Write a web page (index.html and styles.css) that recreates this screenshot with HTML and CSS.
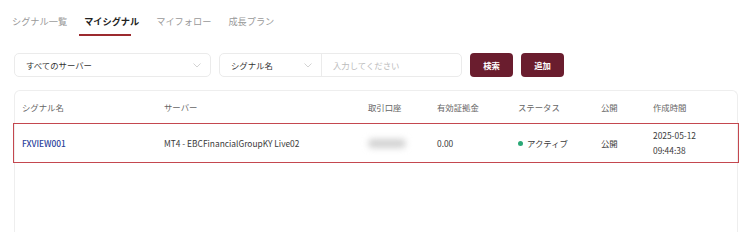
FILE: index.html
```html
<!DOCTYPE html>
<html lang="ja">
<head>
<meta charset="utf-8">
<link rel="stylesheet" href="styles.css">
</head>
<body>
<div class="page">
  <nav class="tabs">
    <span class="tab">シグナル一覧</span>
    <span class="tab active">マイシグナル</span>
    <span class="tab">マイフォロー</span>
    <span class="tab">成長プラン</span>
  </nav>
  <div class="filters">
    <div class="select server">
      <span>すべてのサーバー</span>
      <svg class="chev" width="8" height="5" viewBox="0 0 8 5"><path d="M0.5 0.5 L4 4 L7.5 0.5" fill="none" stroke="#c8c8c8" stroke-width="0.8"/></svg>
    </div>
    <div class="group">
      <div class="select kind">
        <span>シグナル名</span>
        <svg class="chev" width="8" height="5" viewBox="0 0 8 5"><path d="M0.5 0.5 L4 4 L7.5 0.5" fill="none" stroke="#c8c8c8" stroke-width="0.8"/></svg>
      </div>
      <div class="input"><span class="ph">入力してください</span></div>
    </div>
    <button class="btn">検索</button>
    <button class="btn">追加</button>
  </div>
  <div class="card">
    <div class="row head">
      <span>シグナル名</span>
      <span>サーバー</span>
      <span>取引口座</span>
      <span>有効証拠金</span>
      <span>ステータス</span>
      <span>公開</span>
      <span>作成時間</span>
    </div>
    <div class="row body">
      <span class="link">FXVIEW001</span>
      <span>MT4 - EBCFinancialGroupKY Live02</span>
      <span><i class="blur"></i></span>
      <span>0.00</span>
      <span class="status"><i class="dot"></i>アクティブ</span>
      <span>公開</span>
      <span class="date">2025-05-12<br>09:44:38</span>
    </div>
  </div>
</div>
</body>
</html>
```
FILE: styles.css
```css
* { box-sizing: border-box; }
html, body { margin: 0; padding: 0; background: #fff; }
body {
  font-family: "Noto Sans CJK JP", "Noto Sans", sans-serif;
  color: #333;
  width: 750px;
  height: 232px;
  overflow: hidden;
}
.page { padding: 0 12px 0 14px; }
.tabs {
  display: flex;
  gap: 17px;
  padding-top: 13px;
  margin-left: -2px;
  height: 40px;
}
.tab {
  position: relative;
  font-size: 9.2px;
  line-height: 16px;
  color: #999;
}
.tab.active { color: #222; font-weight: 700; }
.tab.active::after {
  content: "";
  position: absolute;
  left: -5px;
  width: 52px;
  top: 21px;
  height: 1.5px;
  background: #9c2a2f;
}
.filters {
  display: flex;
  align-items: center;
  gap: 8px;
  margin-top: 13px;
  height: 24px;
}
.select, .group, .input {
  display: flex;
  align-items: center;
  height: 24px;
  font-size: 8.4px;
}
.select {
  justify-content: space-between;
  border: 1px solid #ebebeb;
  border-radius: 5px;
  padding: 0 9px 0 11px;
}
.server { width: 197px; }
.group {
  border: 1px solid #ebebeb;
  border-radius: 5px;
  width: 243px;
}
.kind { border: none; border-right: 1px solid #ebebeb; border-radius: 0; width: 102px; height: 22px; }
.input { flex: 1; padding-left: 11px; height: 22px; }
.ph { color: #bbb; }
.chev { display: block; }
.btn {
  width: 43px;
  height: 24px;
  border: none;
  border-radius: 4px;
  background: #6a1d2e;
  color: #fff;
  font-family: inherit;
  font-size: 8.4px;
  font-weight: 700;
  padding: 0;
}
.card {
  margin-top: 13px;
  width: 724px;
  height: 142px;
  border: 1px solid #eee;
  border-bottom: none;
  border-radius: 6px 6px 0 0;
}
.row {
  display: grid;
  grid-template-columns: 142px 204px 69px 81px 83px 52px 1fr;
  align-items: center;
  font-size: 8.4px;
  padding-left: 7px;
}
.head { height: 32px; color: #666; }
.body {
  height: 40px;
  margin: 0 -2px 0 -2px;
  padding-left: 8px;
  border: 1.5px solid #c4474f;
  color: #3a3a3a;
}
.link { color: #2b3f9c; font-weight: 500; }
.blur {
  display: block;
  width: 38px;
  height: 9px;
  background: #d2d2d2;
  border-radius: 5px;
  filter: blur(3px);
}
.status { display: flex; align-items: center; gap: 4px; }
.dot { display: block; width: 5px; height: 5px; border-radius: 50%; background: #2aa876; }
.date { line-height: 15px; }
```
